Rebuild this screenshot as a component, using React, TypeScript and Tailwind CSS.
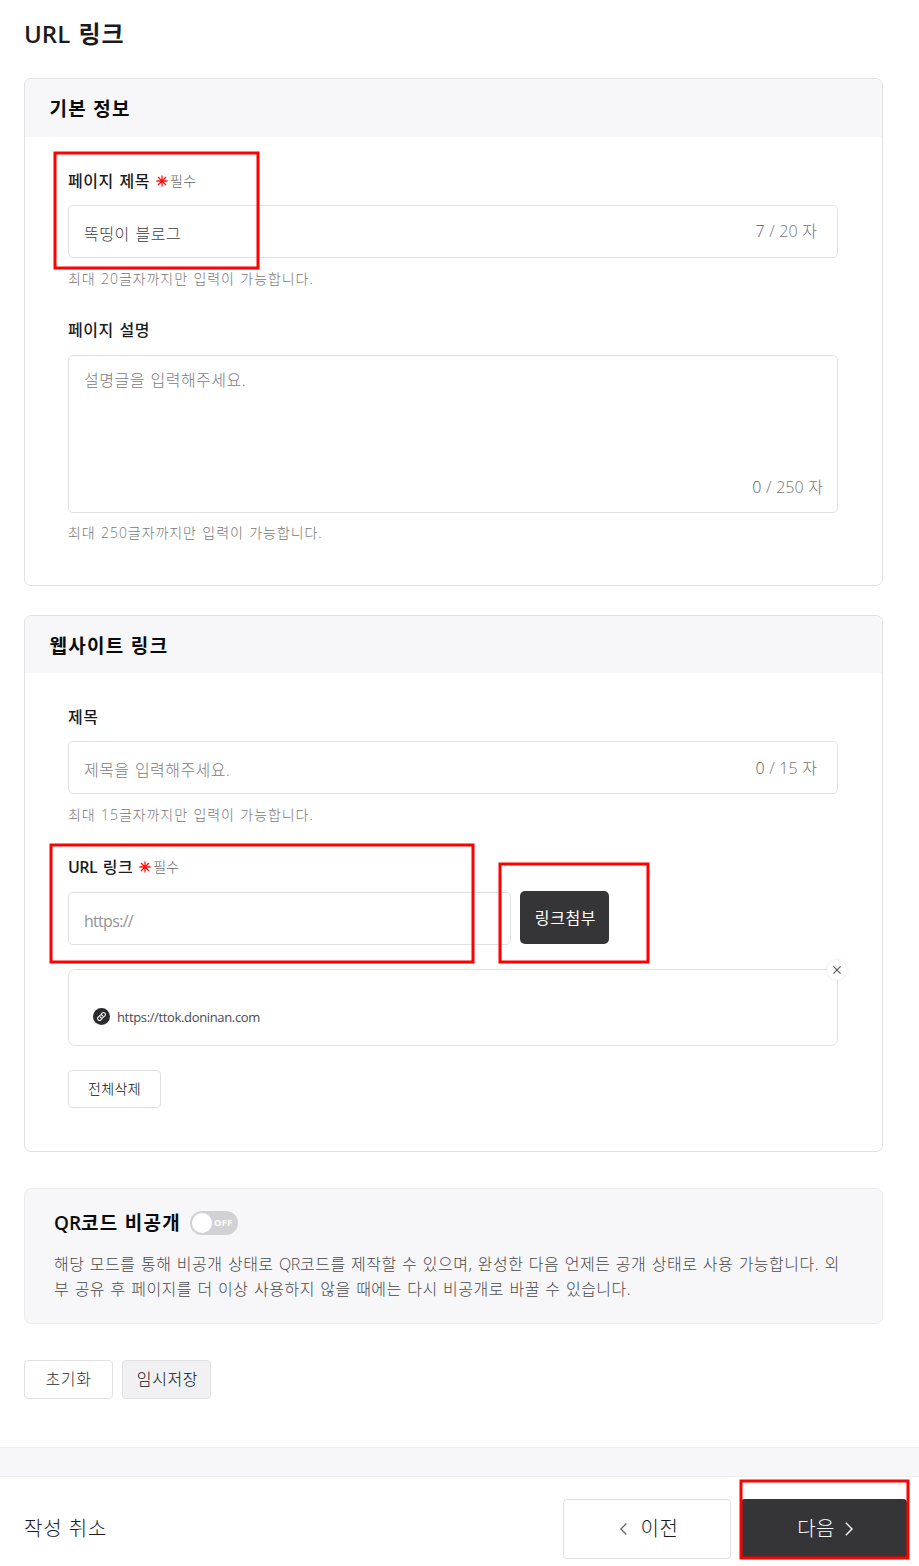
import React from "react";

const LINE = "border border-[#e1e1e4]";

function Highlight({ box }: { box: string }) {
  return (
    <svg className={`pointer-events-none absolute overflow-visible ${box}`}>
      <rect width="100%" height="100%" fill="none" stroke="#ff0000" strokeWidth="3" />
    </svg>
  );
}

function Star() {
  return (
    <svg className="ml-1.5 size-3" viewBox="0 0 12 12" stroke="#ff0f0f" strokeWidth="1.3" fill="none">
      <path d="M6 0.4V11.6M0.4 6H11.6M2 2L10 10M10 2L2 10" />
    </svg>
  );
}

function Label({ children, required }: { children: React.ReactNode; required?: boolean }) {
  return (
    <div className="flex h-6 items-center whitespace-nowrap">
      <span className="text-base leading-6 font-medium tracking-[0.55px] text-[#1b1b1d] [word-spacing:1px]">{children}</span>
      {required && (
        <>
          <Star />
          <span className="ml-0.5 text-[14px] leading-6 tracking-[0.2px] text-[#66666a]">필수</span>
        </>
      )}
    </div>
  );
}

function Help({ children }: { children: React.ReactNode }) {
  return <p className="h-5 pt-px text-[14px] leading-5 tracking-[0.93px] whitespace-nowrap text-[#78787b] [word-spacing:0.9px]">{children}</p>;
}

function Counter({ now, max }: { now: number; max: number }) {
  return (
    <span className="text-base leading-6 whitespace-nowrap text-[#747477] [word-spacing:0.5px]">
      <span className="text-[#545457]">{now}</span> / {max} 자
    </span>
  );
}

function CardHead({ children, height }: { children: React.ReactNode; height: string }) {
  return (
    <h2 className={`flex items-center rounded-t-[6px] bg-[#f7f7f9] pt-[3px] pl-[24.5px] text-[19px] font-bold tracking-[1.3px] text-[#0b0b0c] ${height}`}>
      {children}
    </h2>
  );
}

export default function App() {
  return (
    <div className="relative flex h-[1566px] w-[919px] flex-col overflow-hidden bg-white font-['Open_Sans','Noto_Sans_CJK_KR',sans-serif] font-light">
      <main className="flex flex-col pr-9 pl-6">
        <h1 className="mt-4 h-9 text-[24px] leading-9 font-bold text-[#1b1b1d] [word-spacing:2px]">
          <span className="font-semibold">URL</span> <span className="tracking-[0.9px]">링크</span>
        </h1>

        <section className={`mt-[26px] h-[508px] rounded-[7px] ${LINE}`}>
          <CardHead height="h-[58px]">기본 정보</CardHead>
          <div className="pt-8 pr-11 pl-[43px]">
            <Label required>페이지 제목</Label>
            <div className={`mt-3 flex h-[53px] items-center justify-between rounded-[5px] pr-5 pl-[15px] ${LINE}`}>
              <span className="pt-1 text-base tracking-[0.55px] text-[#3e3e41] [word-spacing:0.9px]">똑띵이 블로그</span>
              <span className="-mt-0.5"><Counter now={7} max={20} /></span>
            </div>
            <div className="mt-2.5">
              <Help>최대 20글자까지만 입력이 가능합니다.</Help>
            </div>
            <div className="mt-[30px]">
              <Label>페이지 설명</Label>
            </div>
            <div className={`mt-[13px] flex h-[158px] flex-col justify-between rounded-[5px] pt-3 pr-3.5 pb-[13px] pl-[15px] ${LINE}`}>
              <span className="text-base leading-6 tracking-[0.5px] text-[#7c7c7f] [word-spacing:0.9px]">설명글을 입력해주세요.</span>
              <span className="self-end"><Counter now={0} max={250} /></span>
            </div>
            <div className="mt-[9px]">
              <Help>최대 250글자까지만 입력이 가능합니다.</Help>
            </div>
          </div>
        </section>

        <section className={`mt-[29px] h-[537px] rounded-[7px] ${LINE}`}>
          <CardHead height="h-[57px]">웹사이트 링크</CardHead>
          <div className="flex flex-col pt-8 pr-11 pl-[43px]">
            <Label>제목</Label>
            <div className={`mt-3 flex h-[53px] items-center justify-between rounded-[5px] pr-5 pl-[15px] ${LINE}`}>
              <span className="pt-1 text-base tracking-[0.45px] text-[#7c7c7f] [word-spacing:0.8px]">제목을 입력해주세요.</span>
              <Counter now={0} max={15} />
            </div>
            <div className="mt-2.5">
              <Help>최대 15글자까지만 입력이 가능합니다.</Help>
            </div>
            <div className="mt-[31px]">
              <Label required>
                <span className="font-semibold tracking-[-0.6px]">URL</span> 링크
              </Label>
            </div>
            <div className="mt-3 flex gap-[9px]">
              <div className={`mt-px flex h-[53px] w-[443px] items-center rounded-[5px] pt-1 pl-[15px] ${LINE}`}>
                <span className="text-base font-normal tracking-[-0.7px] text-[#929295]">https://</span>
              </div>
              <button className="h-[53px] w-[89px] rounded-[5px] bg-[#353537] pl-0.5 text-base font-normal tracking-[0.6px] text-white">링크첨부</button>
            </div>
            <div className={`relative mt-6 flex h-[77px] items-center rounded-[7px] pt-[18px] pl-6 ${LINE}`}>
              <svg className="size-[17px]" viewBox="0 0 17 17" fill="none">
                <circle cx="8.5" cy="8.5" r="8.5" fill="#2b2b2d" />
                <g transform="rotate(-45 8.5 8.5)" stroke="#fff" strokeWidth="1" strokeLinecap="round">
                  <path d="M7.3 10.4H5.7a1.9 1.9 0 0 1 0-3.8H8a1.9 1.9 0 0 1 1.7 2.7M9.7 6.6h1.6a1.9 1.9 0 0 1 0 3.8H9a1.9 1.9 0 0 1-1.7-2.7" />
                </g>
              </svg>
              <span className="ml-[7px] text-[13px] leading-5 font-normal tracking-[-0.35px] text-[#4a4a4d]">https://ttok.doninan.com</span>
              <span className="absolute -top-2.5 -right-2.5 flex size-5 items-center justify-center rounded-full bg-white shadow-[0_0_3px_rgba(0,0,0,0.12)]">
                <svg className="size-2" viewBox="0 0 8 8" stroke="#5b5b5f" strokeWidth="1.2">
                  <path d="M0.4 0.4L7.6 7.6M7.6 0.4L0.4 7.6" />
                </svg>
              </span>
            </div>
            <button className={`mt-6 h-[38px] w-[93px] rounded-[4px] pb-0.5 text-[14px] tracking-[0.4px] text-[#0b0b0c] ${LINE}`}>전체삭제</button>
          </div>
        </section>

        <section className="mt-9 h-[136px] rounded-[7px] border border-[#ececef] bg-[#f7f7f9] pt-5 pl-[29px]">
          <div className="flex h-7 items-center gap-[9px]">
            <h2 className="text-[19px] leading-7 font-bold tracking-[1.25px] text-[#0b0b0c]">
              <span className="font-semibold tracking-[0px]">QR</span>코드 비공개
            </h2>
            <span className="flex h-6 w-12 items-center gap-0.5 rounded-full bg-[#d2d2d4] pl-0.5">
              <span className="size-5 rounded-full bg-white" />
              <span className="text-[9.5px] leading-3 font-bold tracking-[0.2px] text-white">OFF</span>
            </span>
          </div>
          <p className="mt-[15px] text-base leading-[25px] tracking-[0.5px] whitespace-nowrap text-[#48484b] [word-spacing:0.77px]">
            해당 모드를 통해 비공개 상태로 <span className="tracking-[-0.4px]">QR</span>코드를 제작할 수 있으며, 완성한 다음 언제든 공개 상태로 사용 가능합니다. 외<br />
            부 공유 후 페이지를 더 이상 사용하지 않을 때에는 다시 비공개로 바꿀 수 있습니다.
          </p>
        </section>

        <div className="mt-9 flex gap-[9px]">
          <button className={`h-[39px] w-[89px] rounded-[4px] pb-0.5 text-base tracking-[0.6px] text-[#2b2b2d] ${LINE}`}>초기화</button>
          <button className={`h-[39px] w-[89px] rounded-[4px] bg-[#f1f1f4] pb-0.5 pl-0.5 text-base tracking-[0.6px] text-[#0b0b0c] ${LINE}`}>임시저장</button>
        </div>
      </main>

      <div className="mt-12 h-[30px] shrink-0 border-y border-[#f0f0f2] bg-[#f7f7f9]" />

      <footer className="flex items-start justify-between pt-[22px] pr-3 pl-6">
        <span className="mt-[15px] text-[20px] leading-[30px] tracking-[0.9px] text-[#1b1b1d]">작성 취소</span>
        <div className="flex gap-[11px]">
          <button className={`-mr-px flex h-[60px] w-[168px] items-center justify-center gap-3.5 rounded-[4px] pl-1 text-[20px] text-[#1b1b1d] ${LINE}`}>
            <svg className="h-3 w-[7px]" viewBox="0 0 7 12" fill="none" stroke="#6a6a6d" strokeWidth="1.3"><path d="M6.4 0.5L0.9 6L6.4 11.5" /></svg>
            <span className="tracking-[0.5px]">이전</span>
          </button>
          <button className="flex h-[60px] w-[166px] items-center justify-center gap-2.5 rounded-[4px] bg-[#353537] pl-0.5 text-[20px] text-white">
            <span className="tracking-[0.3px]">다음</span>
            <svg className="h-3.5 w-2" viewBox="0 0 8 14" fill="none" stroke="#fff" strokeWidth="1.4"><path d="M0.8 0.7L7 7L0.8 13.3" /></svg>
          </button>
        </div>
      </footer>

      <Highlight box="top-[153px] left-[55px] w-[203px] h-[115px]" />
      <Highlight box="top-[845px] left-[51px] w-[422px] h-[117px]" />
      <Highlight box="top-[864px] left-[500px] w-[148px] h-[98px]" />
      <Highlight box="top-[1481px] left-[741px] w-[167px] h-[77px]" />
    </div>
  );
}
